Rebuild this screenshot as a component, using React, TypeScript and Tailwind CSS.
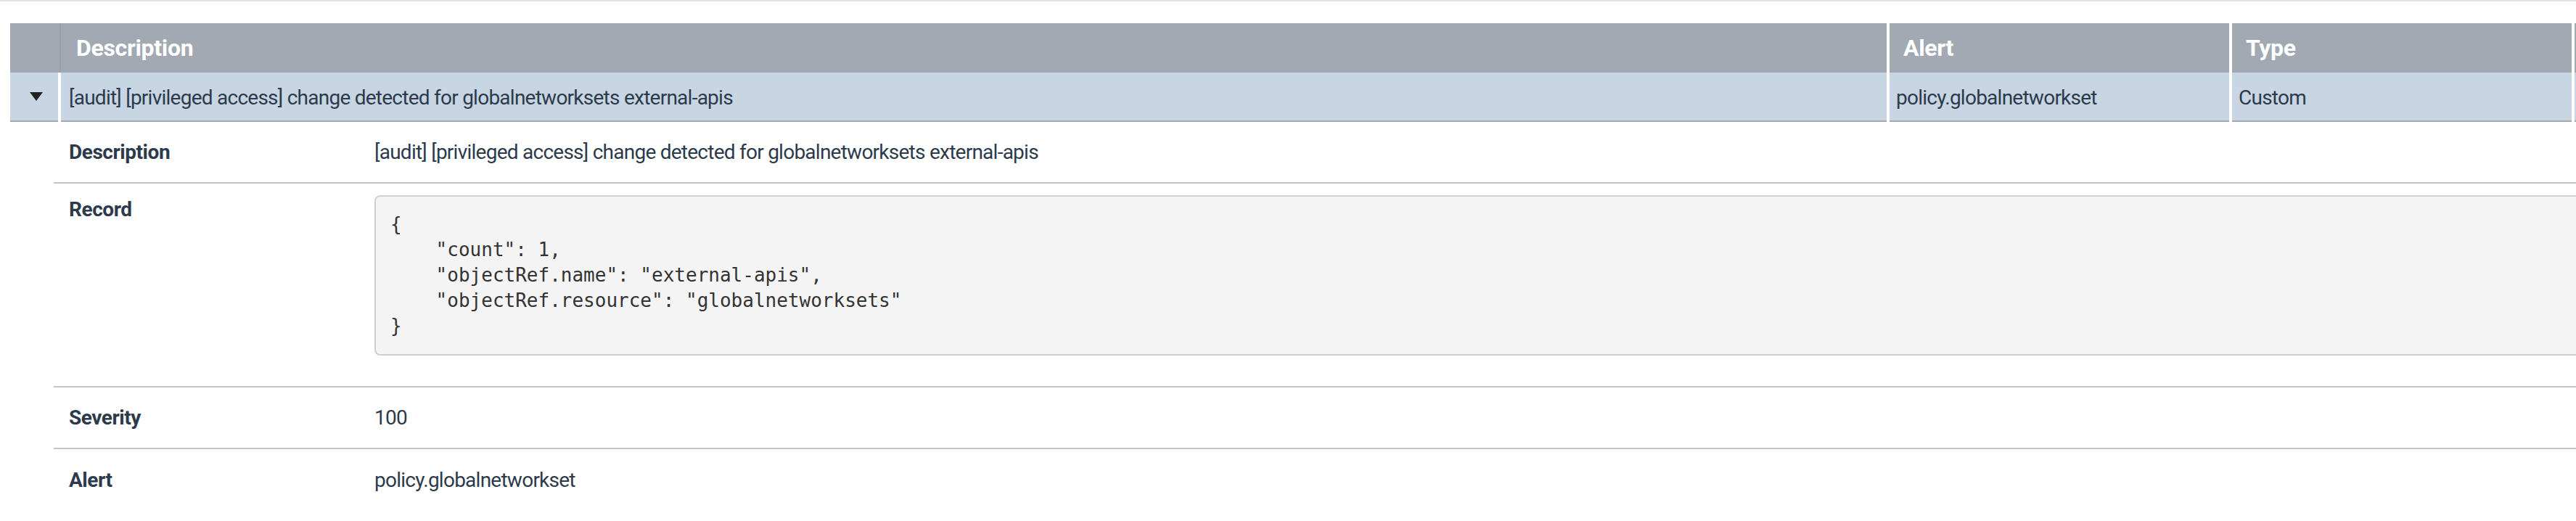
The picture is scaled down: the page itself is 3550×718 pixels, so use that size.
import React from 'react';

const columns = [
  { key: 'alert', label: 'Alert', value: 'policy.globalnetworkset' },
  { key: 'type', label: 'Type', value: 'Custom' },
  { key: 'extra', label: '', value: '' },
];

const record = [
  '{',
  '    "count": 1,',
  '    "objectRef.name": "external-apis",',
  '    "objectRef.resource": "globalnetworksets"',
  '}',
];

function DetailRow({ label, children, last }: { label: string; children: React.ReactNode; last?: boolean }) {
  return (
    <div className={`flex items-center h-[85px] ${last ? '' : 'border-b-2 border-[#c4c4c4]'}`}>
      <div className="w-[442px] shrink-0 pl-[21px] font-bold tracking-[-0.45px]">{label}</div>
      <div className="flex-1 tracking-[-0.75px]">{children}</div>
    </div>
  );
}

export default function App() {
  return (
    <div className="h-screen overflow-hidden bg-white text-[28px] leading-[42px] text-[#2c3a4b] font-['Roboto',sans-serif]">
      <div className="h-[2px] bg-[#e3e3e3]" />

      <div className="pt-[30px] pl-[14px]">
        {/* header */}
        <div className="flex h-[68px] w-[5000px] text-[32px] font-bold text-white tracking-[-0.3px]">
          <div className="w-[70px] shrink-0 bg-[#a2a9b3] border-r-2 border-[#979ea8]" />
          <div className="w-[2516px] shrink-0 bg-[#a2a9b3] pl-[21px] flex items-center">Description</div>
          {columns.map((c) => (
            <div key={c.key} className="ml-[4px] w-[468px] shrink-0 bg-[#a2a9b3] pl-[19px] flex items-center">
              {c.label}
            </div>
          ))}
        </div>

        {/* expanded row */}
        <div className="flex h-[68px] w-[5000px] tracking-[-0.75px]">
          <div className="w-[66px] shrink-0 bg-[#c8d6e3] border-b-2 border-[#a0a8b2] flex items-center justify-center pl-[6px]">
            <svg width="18" height="12" viewBox="0 0 18 12">
              <path d="M0 0 H18 L9 12 Z" fill="#222" />
            </svg>
          </div>
          <div className="ml-[4px] w-[2516px] shrink-0 bg-[#c8d6e3] border-b-2 border-[#a0a8b2] pl-[11px] pt-[4px] flex items-center">
            [audit] [privileged access] change detected for globalnetworksets external-apis
          </div>
          {columns.map((c) => (
            <div
              key={c.key}
              className="ml-[4px] w-[468px] shrink-0 bg-[#c8d6e3] border-b-2 border-[#a0a8b2] pl-[9px] pt-[4px] flex items-center"
            >
              {c.value}
            </div>
          ))}
        </div>

        {/* details */}
        <div className="pl-[60px] w-[5000px]">
          <DetailRow label="Description">
            [audit] [privileged access] change detected for globalnetworksets external-apis
          </DetailRow>

          <div className="flex border-b-2 border-[#c4c4c4]">
            <div className="w-[442px] shrink-0 pl-[21px] pt-[15px] font-bold tracking-[-0.45px]">Record</div>
            <div className="flex-1 pt-[16px] pb-[42px]">
              <pre className="w-[3200px] rounded-[8px] border-2 border-[#cfcfcf] bg-[#f4f4f4] px-[20px] py-[21px] font-['DejaVu_Sans_Mono',monospace] text-[26px] leading-[35px] text-[#333]">
                {record.join('\n')}
              </pre>
            </div>
          </div>

          <DetailRow label="Severity">100</DetailRow>
          <DetailRow label="Alert" last>
            policy.globalnetworkset
          </DetailRow>
        </div>
      </div>
    </div>
  );
}
